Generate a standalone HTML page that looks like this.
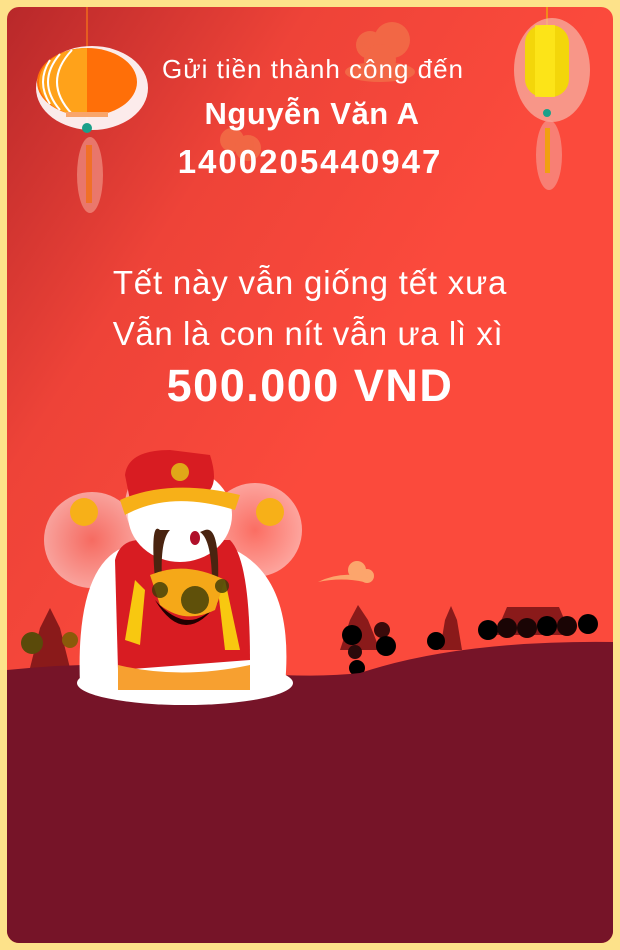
<!DOCTYPE html>
<html><head><meta charset="utf-8"><style>
html,body{margin:0;padding:0;width:620px;height:950px;overflow:hidden;background:#fde28a}
.t{position:absolute;left:0;width:620px;text-align:center;color:#fff;font-family:"Liberation Sans",sans-serif;white-space:nowrap}
</style></head><body>
<svg width="620" height="950" style="position:absolute;left:0;top:0">
<defs>
<linearGradient id="bg" x1="0" y1="0" x2="0.5" y2="0.5">
<stop offset="0" stop-color="#b8282a"/><stop offset="0.5" stop-color="#ee4338"/><stop offset="1" stop-color="#fb4a3c"/>
</linearGradient>
<radialGradient id="hal"><stop offset="0" stop-color="#fff" stop-opacity="0.2"/><stop offset="1" stop-color="#fff" stop-opacity="0.5"/></radialGradient>
</defs>
<rect x="0" y="0" width="620" height="950" rx="16" fill="#fde28a"/>
<rect x="7" y="7" width="606" height="936" rx="12" fill="url(#bg)"/>
<g fill="#f27048" opacity="0.8"><circle cx="370" cy="45" r="14"/><circle cx="392" cy="40" r="18"/><circle cx="380" cy="60" r="16"/><ellipse cx="380" cy="72" rx="35" ry="10"/>
<circle cx="232" cy="140" r="12"/><circle cx="248" cy="148" r="13"/></g>
<line x1="87" y1="7" x2="87" y2="130" stroke="#f06a1c" stroke-width="1.5"/>
<ellipse cx="92" cy="88" rx="56" ry="42" fill="#fff" opacity="0.9"/>
<ellipse cx="87" cy="82" rx="50" ry="34" fill="#ff6f08"/>
<path d="M87 48 A48 34 0 0 0 87 116Z" fill="#ffa21a"/>
<g stroke="#fff" stroke-width="2" fill="none"><path d="M72 50q-30 32 0 64"/><path d="M60 54q-24 28 0 56"/><path d="M50 60q-14 22 0 44"/></g>
<rect x="66" y="112" width="42" height="5" fill="#f9a56a"/>
<circle cx="87" cy="128" r="5" fill="#1aa08a"/>
<ellipse cx="90" cy="175" rx="13" ry="38" fill="#f4a091" opacity="0.6"/>
<rect x="86" y="145" width="6" height="58" fill="#f07028"/>
<line x1="547" y1="7" x2="547" y2="28" stroke="#f0a010" stroke-width="1.5"/>
<ellipse cx="552" cy="70" rx="38" ry="52" fill="#f6b6a8" opacity="0.7"/>
<rect x="525" y="25" width="44" height="72" rx="18" fill="#f3d60a"/>
<rect x="535" y="25" width="20" height="72" fill="#ffe91e" opacity="0.7"/>
<circle cx="547" cy="113" r="4" fill="#1aa08a"/>
<ellipse cx="549" cy="155" rx="13" ry="35" fill="#f6a49a" opacity="0.6"/>
<rect x="545" y="128" width="5" height="45" fill="#f0a010"/>
<g fill="#fca56c"><circle cx="357" cy="570" r="9"/><circle cx="367" cy="576" r="7"/><path d="M318 582q25-12 50-4l-4 4q-22-5-46 0z"/></g>
<g fill="#8a1a1a"><path d="M30 668l10-40 10-20 10 20 10 40z"/><path d="M340 650l10-30 8-15 10 15 12 30z"/><path d="M440 650l5-30 6-14 6 14 5 30z"/><path d="M495 635l12-28h52l12 28z"/></g>
<circle cx="32" cy="643" r="11" fill="#5a4a0a"/><circle cx="70" cy="640" r="8" fill="#8a5a0a"/>
<g fill="#000"><circle cx="352" cy="635" r="10"/><circle cx="382" cy="630" r="8" fill="#3a0a0a"/><circle cx="386" cy="646" r="10"/><circle cx="355" cy="652" r="7" fill="#2a0a0a"/><circle cx="357" cy="668" r="8"/><circle cx="436" cy="641" r="9"/>
<circle cx="488" cy="630" r="10"/><circle cx="507" cy="628" r="10" fill="#1a0505"/><circle cx="527" cy="628" r="10" fill="#1a0505"/><circle cx="547" cy="626" r="10"/><circle cx="567" cy="626" r="10" fill="#1a0505"/><circle cx="588" cy="624" r="10"/></g>
<path d="M7 670 Q100 660 200 668 Q300 680 360 673 Q460 640 613 642 V930 a12 12 0 0 1 -12 13 H19 a12 12 0 0 1 -12 -13 Z" fill="#761428"/>
<circle cx="92" cy="540" r="48" fill="url(#hal)"/>
<circle cx="255" cy="530" r="47" fill="url(#hal)"/>
<circle cx="170" cy="505" r="45" fill="#fff" opacity="0.5"/>
<path d="M80 685 Q75 560 130 545 L160 535 L235 550 Q295 580 285 685 Z" fill="#fff"/>
<ellipse cx="185" cy="683" rx="108" ry="22" fill="#fff"/>
<path d="M115 560 Q120 540 140 540 L230 540 Q250 560 250 660 L118 670 Z" fill="#d81c22"/>
<path d="M118 665 Q180 680 250 665 L250 690 L118 690 Z" fill="#f7a030"/>
<ellipse cx="180" cy="515" rx="52" ry="47" fill="#fff"/>
<path d="M155 600 Q185 650 220 600 Q190 640 155 600z" fill="#200000"/>
<path d="M160 530 Q150 520 155 580 L162 580 Q160 540 170 530z" fill="#4a2410"/>
<path d="M205 530 Q220 525 218 585 L212 585 Q212 540 200 532z" fill="#4a2410"/>
<ellipse cx="195" cy="538" rx="5" ry="7" fill="#b0102a"/>
<path d="M125 475 Q128 450 170 450 L210 455 Q218 480 210 490 L130 500z" fill="#d81c22"/>
<path d="M120 500 Q170 478 240 495 L235 510 Q170 490 125 515z" fill="#f7b018"/>
<circle cx="180" cy="472" r="9" fill="#e0a818"/>
<circle cx="84" cy="512" r="14" fill="#f7b018"/><circle cx="270" cy="512" r="14" fill="#f7b018"/>
<path d="M135 580 L125 640 L140 645 L145 590z" fill="#f8c810"/>
<path d="M225 580 L240 650 L225 650 L218 590z" fill="#f8c810"/>
<path d="M150 575 Q185 560 225 580 L215 610 Q185 625 160 605z" fill="#f5a818"/>
<circle cx="195" cy="600" r="14" fill="#3a3a08" opacity="0.8"/><circle cx="160" cy="590" r="8" fill="#3a3a08" opacity="0.8"/><circle cx="222" cy="586" r="7" fill="#3a3a08" opacity="0.8"/>
</svg>
<div class="t" style="top:54px;font-size:26px;letter-spacing:1px;left:3px">Gửi tiền thành công đến</div>
<div class="t" style="top:96px;font-size:31px;font-weight:bold;left:2px;letter-spacing:0.5px">Nguyễn Văn A</div>
<div class="t" style="top:143px;font-size:33px;font-weight:bold;letter-spacing:2px">1400205440947</div>
<div class="t" style="top:264px;font-size:33px;letter-spacing:0.8px">Tết này vẫn giống tết xưa</div>
<div class="t" style="top:315px;font-size:33px;letter-spacing:0.6px;left:-2px">Vẫn là con nít vẫn ưa lì xì</div>
<div class="t" style="top:360px;font-size:45px;font-weight:bold;letter-spacing:1.5px">500.000 VND</div>
</body></html>
